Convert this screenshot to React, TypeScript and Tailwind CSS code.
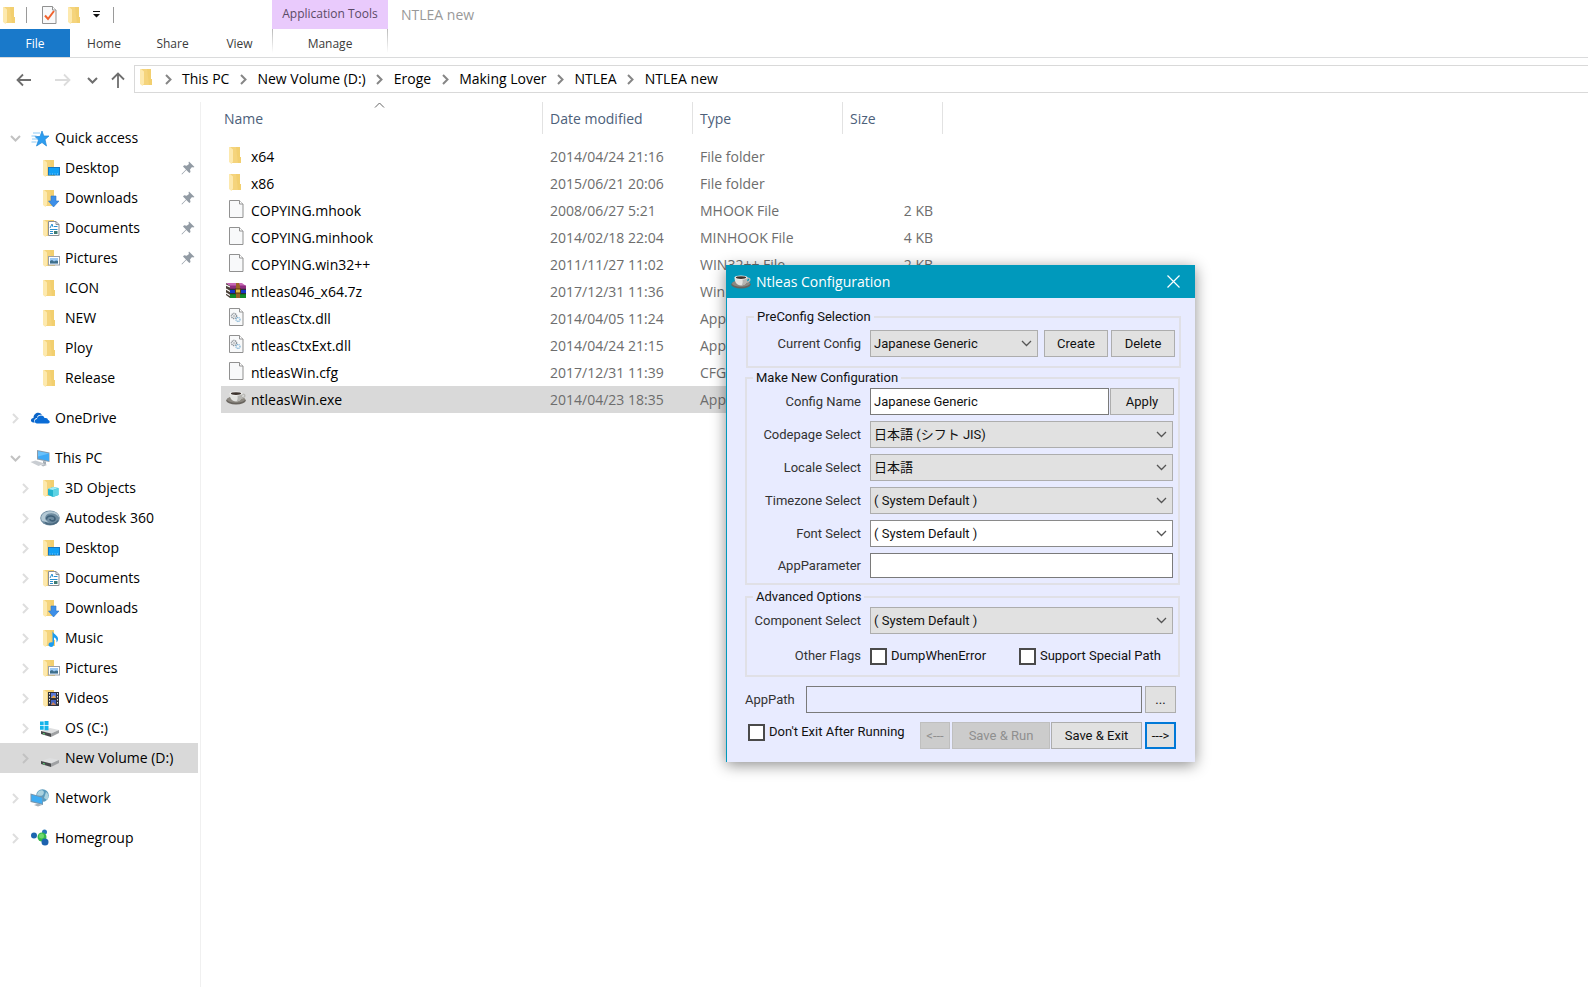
import type { ReactNode } from "react";

const FOLDER_ICONS = {
    plain: null,
    desktop: (
        <>
            <rect x="8.5" y="9.5" width="11" height="7.5" fill="#12a0f5" stroke="#1578c2" />
            <path d="M9.5 16h9" stroke="#7fd0ff" strokeDasharray="1 1.5" />
        </>
    ),
    downloads: <path d="M11 8h5v5h3l-5.5 6L8.500 13H11z" fill="#3d8fe8" stroke="#2d75c8" strokeWidth=".6" />,
    documents: (
        <>
            <path d="M8.500 3.500h7.500l3 3v11h-10.500z" fill="#fff" stroke="#8b8f94" />
            <path d="M16 3.500v3h3" fill="none" stroke="#8b8f94" />
            <path d="M10 10l2-4 1 3M14 8.500h3.500M10 11.500h7.500M10 13.500h3M10 15.500h3" fill="none" stroke="#2a8fd0" />
            <path d="M14 13h3.500v3H14z" fill="#3d7a72" />
        </>
    ),
    pictures: (
        <>
            <rect x="8.500" y="8.500" width="11" height="8.500" fill="#fff" stroke="#9aa0a8" />
            <rect x="10" y="10" width="8" height="5.500" fill="#9cc9f5" />
            <path d="M10 13l2-1 2 1.500 2-1 2 .500v2.500h-8z" fill="#3f6f8c" />
        </>
    ),
    objects: (
        <>
            <path d="M8 11l5-2 5.500 1v7L13 19l-5-2z" fill="#24b4cf" />
            <path d="M8 11l5-2 5.500 1-5.500 2z" fill="#a6ecf5" />
            <path d="M13 12l5.500-2v7L13 19z" fill="#5ed3e4" />
        </>
    ),
    music: (
        <path
            d="M12.500 3c.500 3 5 4 5.500 7.500.200 1.800-.500 3-1.500 4 .500-3-.800-4.500-2.500-5v6.500c0 4-5.500 3.500-5.500.800 0-2 2-2.800 4-2.300z"
            fill="#1b9cf0"
        />
    ),
    videos: (
        <>
            <rect x="8" y="4" width="11" height="14" fill="#30323a" />
            <path d="M9.500 5v12M17.500 5v12" stroke="#e8e8e8" strokeDasharray="1.500 1.500" />
            <rect x="11" y="5" width="5" height="5" fill="#5878d8" />
            <path d="M11 10l3-3 2 3z" fill="#e8a84c" />
            <rect x="11" y="12" width="5" height="5" fill="#4562bd" />
            <path d="M11 17l2-3 3 3z" fill="#c9825c" />
        </>
    ),
};

type FolderKind = keyof typeof FOLDER_ICONS;

const Svg = ({ children, className = "" }: { children: ReactNode; className?: string }) => (
    <svg viewBox="0 0 20 20" className={`size-5 shrink-0 ${className}`} aria-hidden="true">
        {children}
    </svg>
);

const Folder = ({ kind = "plain", className }: { kind?: FolderKind; className?: string }) => (
    <Svg className={className}>
        <path d="M4 2h10v10h1v6H5z" fill="#f5d47c" />
        <path d="M10 2h4v10h1v6h-3z" fill="#f0cb68" opacity=".6" />
        <path d="M3 2h1l3 2.500v12L5.500 19 3 17z" fill="#fde9ae" />
        {FOLDER_ICONS[kind]}
    </Svg>
);

const Page = ({ children, className }: { children?: ReactNode; className?: string }) => (
    <Svg className={className}>
        <path d="M3.500 1.500h10l3.500 3.500v13.500H3.500z" fill="#f8f9fa" stroke="#919191" />
        <path d="M13.500 1.500V5H17" fill="#fff" stroke="#919191" />
        {children}
    </Svg>
);

const Gears = () => (
    <>
        <circle cx="8" cy="9" r="2.500" fill="none" stroke="#8a9097" strokeWidth="1.500" strokeDasharray="1.200 .600" />
        <circle cx="8" cy="9" r=".800" fill="#8a9097" />
        <circle cx="12" cy="12.500" r="2" fill="none" stroke="#7fb2d4" strokeWidth="1.300" strokeDasharray="1 .500" />
    </>
);

const Cup = ({ className }: { className?: string }) => (
    <Svg className={className}>
        <ellipse cx="10" cy="12.500" rx="9.800" ry="4" fill="#68645e" />
        <ellipse cx="10" cy="11.500" rx="9" ry="3.200" fill="#8c8881" />
        <path d="M15.500 6.500c4-1.500 5 2.500 0 4" fill="none" stroke="#b9b9b5" strokeWidth="1.300" />
        <path d="M3.500 5.500h13c0 4-2 8-6.500 8s-6.500-4-6.500-8z" fill="#e3e3e0" />
        <path d="M11 6h5.500c0 4-2 7.500-6 7.500 1.500-2 1.500-5 .500-7.500z" fill="#b5b5b1" />
        <ellipse cx="10" cy="5.500" rx="6.500" ry="2" fill="#f4f4f2" />
        <ellipse cx="10" cy="5.600" rx="5.200" ry="1.400" fill="#3d332d" />
    </Svg>
);

const Books = ({ className }: { className?: string }) => (
    <Svg className={className}>
        <path d="M0 3l4 2v13l-4-3z" fill="#4a4038" />
        <path d="M0 5l4 2M0 9l4 2.500M0 13l4 2.500" stroke="#fff" strokeWidth="1.200" />
        <path d="M0 3h16l4 3H4z" fill="#c667b4" />
        <path d="M4 5.500h16V9H4z" fill="#8e2f80" />
        <path d="M4 9.500h16v4H4z" fill="#1538c4" />
        <path d="M4 14h16v4H4z" fill="#128a28" />
        <path d="M4 9.300h16M4 13.700h16" stroke="#141414" />
        <path d="M10 3h3l1 3v12h-4V6z" fill="#9b6427" />
        <rect x="9.500" y="9" width="5" height="4" fill="#e2bf48" stroke="#593b12" />
    </Svg>
);

const Star = () => (
    <Svg>
        <path d="M12 3l1.800 5H19l-4 3.500L16.500 18 12 14.500 6.500 18l2-6L5 8.500h5z" fill="#2c9df0" stroke="#2387d6" strokeWidth=".700" />
        <path d="M3 5h7M1.500 8h5M2 11h6M1.500 14h5" stroke="#7fc3f4" strokeWidth=".900" />
    </Svg>
);

const Cloud = () => (
    <Svg>
        <path d="M3.500 14.500C0 14.500.200 10 3.500 10c0-5 6-7 8.500-3-3-1-5 1-5 3-3 .500-3.500 3-2 4.500z" fill="#0a64c8" />
        <path d="M7 15.500c-3 0-3-4.500 0-4.500 0-4 6.500-5 7.500-1 3-.500 3.500 1 3.500 2 2.500.500 2 3.500 0 3.500z" fill="#0a6cd6" />
    </Svg>
);

const Computer = () => (
    <Svg>
        <path d="M7 2l12.500 2.500v9.500L7 11.500z" fill="#8b9aa8" />
        <path d="M8 3.200l11 2.300v7.500L8 10.500z" fill="#3fa9f5" />
        <path d="M8 3.200l11 2.300-11 3z" fill="#69c1fb" />
        <path d="M13 13l3 .500v3l-3-.500z" fill="#a4adb5" />
        <path d="M.500 14l5-1.500 9 3-6 2.500z" fill="#c9cdd2" />
        <path d="M11 17l4-1 2 1-4 1.500z" fill="#b3b9bf" />
    </Svg>
);

const Autodesk = () => (
    <Svg>
        <ellipse cx="10" cy="10" rx="9.800" ry="7.500" fill="#6d8ba0" />
        <path d="M2 13c-3-6 3-10 9-9.800 5 .200 8 2.800 8 6.300-3-5-10.500-5.500-13-2-1.800 2.500-.500 5.500 3 7z" fill="#b3c8d4" />
        <path d="M6.500 11.500c0-4.500 8.500-4.500 8.500-.800 0 2.800-5 2.800-5 .300" fill="none" stroke="#3f6078" strokeWidth="1.700" />
        <path d="M5 14.500c4 3 11 2 13-2" fill="none" stroke="#48677d" strokeWidth="1.500" />
    </Svg>
);

const Drive = ({ system }: { system?: boolean }) => (
    <Svg>
        <path d="M1 13l9-3 9 2-8 3.500z" fill="#dedfe0" />
        <path d="M1 13l10 2.500V19L1 16z" fill="#47494b" />
        <path d="M11 15.500l8-3.500v3L11 19z" fill="#9fa1a3" />
        <path d="M3 15.500l2 .600" stroke="#5fe07a" />
        {system && <path d="M0 3.500h3.700v3.700H0zM4.500 3h4v4.200h-4zM0 8h3.700v3.700H0zM4.500 8h4v4.200h-4z" fill="#14b4ea" />}
    </Svg>
);

const Network = () => (
    <Svg>
        <circle cx="12.500" cy="7.500" r="6.300" fill="#5b9bbd" />
        <path d="M9 3c3-2 6 0 4.500 3S9 7 7 8c0-2 .500-4 2-5zM16 4c3 2 3 6 1 8l-3-2z" fill="#abd2df" />
        <path d="M.500 5.500L13 9v8L.500 14z" fill="#7795ad" />
        <path d="M1.500 6.700L12.300 9.700v6L1.500 13z" fill="#3eacf3" />
        <path d="M4 17l4-1.500 4 1.500-4 1.500z" fill="#a6b1ba" />
    </Svg>
);

const Homegroup = () => (
    <Svg>
        <circle cx="4" cy="7.500" r="3" fill="#1d66b0" />
        <circle cx="14.500" cy="4" r="2.500" fill="#2876b8" />
        <circle cx="12" cy="9" r="4.500" fill="#35b84a" />
        <circle cx="11.500" cy="8" r="2.500" fill="#70d86d" />
        <circle cx="15" cy="14" r="3.500" fill="#1d62ae" />
    </Svg>
);

const Pin = () => (
    <svg viewBox="0 0 14 14" className="ml-auto mr-[3px] size-[14px] shrink-0" aria-hidden="true">
        <path d="M8 0.500L13.500 6l-1.500.500-1-.500-2 2.500.500 2.500-1.200 1-3-3L1 13.500l-.500-.500L5 8.500l-3-3 1.200-1.200 2.500.500L8 3l-.500-1.200z" fill="#929ba4" />
    </svg>
);

const Chevron = ({ dir, className = "" }: { dir: "right" | "down" | "up"; className?: string }) => {
    const paths = { right: "M3 1l4.500 4.500L3 10", down: "M1 3l4.500 4.500L10 3", up: "M1 7.500L5.500 3 10 7.500" };
    return (
        <svg viewBox="0 0 11 11" className={`size-[11px] shrink-0 ${className}`} fill="none" stroke="currentColor" aria-hidden="true">
            <path d={paths[dir]} />
        </svg>
    );
};

interface TreeItem {
    label: string;
    icon: ReactNode;
    open?: boolean;
    leaf?: boolean;
    pinned?: boolean;
    selected?: boolean;
    items?: TreeItem[];
}

const TREE: TreeItem[] = [
    {
        label: "Quick access",
        icon: <Star />,
        open: true,
        items: [
            { label: "Desktop", icon: <Folder kind="desktop" />, leaf: true, pinned: true },
            { label: "Downloads", icon: <Folder kind="downloads" />, leaf: true, pinned: true },
            { label: "Documents", icon: <Folder kind="documents" />, leaf: true, pinned: true },
            { label: "Pictures", icon: <Folder kind="pictures" />, leaf: true, pinned: true },
            { label: "ICON", icon: <Folder />, leaf: true },
            { label: "NEW", icon: <Folder />, leaf: true },
            { label: "Ploy", icon: <Folder />, leaf: true },
            { label: "Release", icon: <Folder />, leaf: true },
        ],
    },
    { label: "OneDrive", icon: <Cloud /> },
    {
        label: "This PC",
        icon: <Computer />,
        open: true,
        items: [
            { label: "3D Objects", icon: <Folder kind="objects" /> },
            { label: "Autodesk 360", icon: <Autodesk /> },
            { label: "Desktop", icon: <Folder kind="desktop" /> },
            { label: "Documents", icon: <Folder kind="documents" /> },
            { label: "Downloads", icon: <Folder kind="downloads" /> },
            { label: "Music", icon: <Folder kind="music" /> },
            { label: "Pictures", icon: <Folder kind="pictures" /> },
            { label: "Videos", icon: <Folder kind="videos" /> },
            { label: "OS (C:)", icon: <Drive system /> },
            { label: "New Volume (D:)", icon: <Drive />, selected: true },
        ],
    },
    { label: "Network", icon: <Network /> },
    { label: "Homegroup", icon: <Homegroup /> },
];

const FILES = [
    { name: "x64", icon: <Folder className="mb-1" />, date: "2014/04/24 21:16", type: "File folder", size: "" },
    { name: "x86", icon: <Folder className="mb-1" />, date: "2015/06/21 20:06", type: "File folder", size: "" },
    { name: "COPYING.mhook", icon: <Page className="mb-1" />, date: "2008/06/27 5:21", type: "MHOOK File", size: "2 KB" },
    { name: "COPYING.minhook", icon: <Page className="mb-1" />, date: "2014/02/18 22:04", type: "MINHOOK File", size: "4 KB" },
    { name: "COPYING.win32++", icon: <Page className="mb-1" />, date: "2011/11/27 11:02", type: "WIN32++ File", size: "2 KB" },
    { name: "ntleas046_x64.7z", icon: <Books className="mb-1" />, date: "2017/12/31 11:36", type: "WinRAR", size: "" },
    { name: "ntleasCtx.dll", icon: <Page className="mb-1"><Gears /></Page>, date: "2014/04/05 11:24", type: "App ext", size: "" },
    { name: "ntleasCtxExt.dll", icon: <Page className="mb-1"><Gears /></Page>, date: "2014/04/24 21:15", type: "App ext", size: "" },
    { name: "ntleasWin.cfg", icon: <Page className="mb-1" />, date: "2017/12/31 11:39", type: "CFG File", size: "" },
    { name: "ntleasWin.exe", icon: <Cup className="mb-1" />, date: "2014/04/23 18:35", type: "Application", size: "", selected: true },
];

const CRUMBS = ["This PC", "New Volume (D:)", "Eroge", "Making Lover", "NTLEA", "NTLEA new"];

const TreeRow = ({ item, nested }: { item: TreeItem; nested?: boolean }) => (
    <a
        href="#"
        className={`flex h-[30px] items-center gap-[5px] ${nested ? "pl-5" : "pl-[10px]"} ${item.selected ? "bg-[#d9d9d9]" : ""}`}
    >
        <span className={`flex w-[15px] ${item.open || item.selected ? "text-[#c2c2c2]" : "text-[#dedede]"}`}>
            {!item.leaf && <Chevron dir={item.open ? "down" : "right"} className="stroke-2" />}
        </span>
        {item.icon}
        <span className="whitespace-nowrap">{item.label}</span>
        {item.pinned && <Pin />}
    </a>
);

const Sidebar = () => (
    <nav className="w-[201px] shrink-0 border-r border-[#f0f0f0] pr-[2px] pt-[21px]">
        <ul className="flex flex-col gap-[10px]">
            {TREE.map((item) => (
                <li key={item.label}>
                    <TreeRow item={item} />
                    {item.items && (
                        <ul>
                            {item.items.map((child) => (
                                <li key={child.label}>
                                    <TreeRow item={child} nested />
                                </li>
                            ))}
                        </ul>
                    )}
                </li>
            ))}
        </ul>
    </nav>
);

const HeaderCell = ({ children }: { children: ReactNode }) => (
    <th className="p-0 pb-[9px] font-normal">
        <div className="flex h-8 items-center border-r border-[#e2e2e2] pl-[7px] pt-[2px]">{children}</div>
    </th>
);

const FileTable = () => (
    <table className="ml-5 w-[722px] table-fixed self-start text-left text-[#6d6d6d]">
        <colgroup>
            <col className="w-[322px]" />
            <col className="w-[150px]" />
            <col className="w-[150px]" />
            <col className="w-[100px]" />
        </colgroup>
        <thead className="text-[#4c607a]">
            <tr>
                <th className="p-0 pb-[9px] font-normal">
                    <div className="relative flex h-8 items-center border-r border-[#e2e2e2] pl-[3px] pt-[2px]">
                        Name
                        <Chevron dir="up" className="absolute left-[153px] top-[-2px] text-[#666]" />
                    </div>
                </th>
                <HeaderCell>Date modified</HeaderCell>
                <HeaderCell>Type</HeaderCell>
                <HeaderCell>Size</HeaderCell>
            </tr>
        </thead>
        <tbody>
            {FILES.map((file) => (
                <tr key={file.name} className={`h-[27px] ${file.selected ? "bg-[#d9d9d9]" : ""}`}>
                    <td className="p-0 pl-[5px]">
                        <div className="flex h-[27px] items-center gap-[5px] text-black">
                            {file.icon}
                            {file.name}
                        </div>
                    </td>
                    <td className="p-0 pl-[7px]">{file.date}</td>
                    <td className="p-0 pl-[7px]">{file.type}</td>
                    <td className="p-0 pr-[10px] text-right">{file.size}</td>
                </tr>
            ))}
        </tbody>
    </table>
);

const Ribbon = () => (
    <header className="text-[12px] text-[#3b3b3b]">
        <div className="flex h-[29px]">
            <div className="flex w-[272px] items-center">
                <Folder />
                <span className="ml-[6px] h-4 w-px bg-[#9a9a9a]" />
                <Page className="ml-3">
                    <path d="M6 10.500l3 3.500 6-8" fill="none" stroke="#f0622d" strokeWidth="2" />
                </Page>
                <Folder className="ml-[6px]" />
                <svg viewBox="0 0 7 7" className="ml-2 size-[7px]" aria-hidden="true">
                    <path d="M0 0h7v1H0zM0 3h7L3.500 6.500z" fill="#111" />
                </svg>
                <span className="ml-[13px] h-4 w-px bg-[#9a9a9a]" />
            </div>
            <div className="flex w-[116px] items-center justify-center whitespace-nowrap bg-[#e9cafc] pb-px text-[#5b4a66]">
                Application Tools
            </div>
            <h1 className="ml-[13px] self-center text-[14px] text-[#999]">NTLEA new</h1>
        </div>
        <div className="flex h-[29px] border-b border-[#dadbdc]">
            <button className="w-[70px] bg-[#1979ca] pt-[2px] text-white">File</button>
            <button className="w-[68px] pt-[2px]">Home</button>
            <button className="w-[69px] pt-[2px]">Share</button>
            <button className="w-[65px] pt-[2px]">View</button>
            <div className="flex w-[116px] justify-between">
                <span className="h-6 w-px bg-linear-to-b from-[#b9b9b9] to-white" />
                <button className="pt-[2px]">Manage</button>
                <span className="h-6 w-px bg-linear-to-b from-[#b9b9b9] to-white" />
            </div>
        </div>
    </header>
);

const AddressBar = () => (
    <div className="flex h-[44px] items-start pt-[7px]">
        <div className="flex h-7 w-[134px] shrink-0 items-center pl-4 pt-[2px] text-[#6e6e6e]">
            <button aria-label="Back">
                <svg viewBox="0 0 16 16" className="size-4" fill="none" stroke="currentColor" strokeWidth="1.800">
                    <path d="M15 8H1.500M7 2.500L1.500 8 7 13.500" />
                </svg>
            </button>
            <button aria-label="Forward" className="ml-[23px] text-[#dcdcdc]">
                <svg viewBox="0 0 16 16" className="size-4" fill="none" stroke="currentColor" strokeWidth="1.800">
                    <path d="M0 8h14M9 2.500L14.500 8 9 13.500" />
                </svg>
            </button>
            <button aria-label="Recent locations" className="ml-4">
                <Chevron dir="down" className="stroke-2" />
            </button>
            <button aria-label="Up" className="ml-3">
                <svg viewBox="0 0 16 16" className="size-4" fill="none" stroke="currentColor" strokeWidth="1.800">
                    <path d="M8 16V1.500M2 7.500l6-6 6 6" />
                </svg>
            </button>
        </div>
        <div className="flex h-7 flex-1 items-center border border-r-0 border-[#d9d9d9] pl-[2px]">
            <Folder className="-mr-[3px] mb-1" />
            <ol className="flex">
                {CRUMBS.map((crumb) => (
                    <li key={crumb} className="flex items-center whitespace-nowrap">
                        <span className="flex w-7 justify-center text-[#868686]">
                            <Chevron dir="right" className="stroke-2" />
                        </span>
                        <a href="#">{crumb}</a>
                    </li>
                ))}
            </ol>
        </div>
    </div>
);

const DialogSelect = ({ id, options, white }: { id: string; options: string[]; white?: boolean }) => (
    <div className="relative flex-1">
        <select
            id={id}
            className={`block h-[27px] w-full appearance-none rounded-none border px-[3px] ${
                white ? "border-[#8a8a8a] bg-white" : "border-[#adadad] bg-[#e1e1e1]"
            }`}
        >
            {options.map((option) => (
                <option key={option}>{option}</option>
            ))}
        </select>
        <Chevron dir="down" className="pointer-events-none absolute right-[6px] top-2 stroke-[1.3px] text-[#555]" />
    </div>
);

const DialogButton = ({ children, className, disabled }: { children: ReactNode; className: string; disabled?: boolean }) => (
    <button
        disabled={disabled}
        className={`h-[27px] shrink-0 whitespace-nowrap ${
            disabled ? "border border-[#bfbfbf] bg-[#ccc] text-[#8f8f8f]" : "bg-[#e1e1e1]"
        } ${className}`}
    >
        {children}
    </button>
);

const Field = ({ id, label, children }: { id: string; label: string; children: ReactNode }) => (
    <div className="flex items-center gap-[9px]">
        <label htmlFor={id} className="w-[114px] shrink-0 whitespace-nowrap text-right text-[#333]">
            {label}
        </label>
        {children}
    </div>
);

const Group = ({ title, className, children }: { title: string; className: string; children: ReactNode }) => (
    <fieldset className={`border-2 border-[#e0e0e6] ${className}`}>
        <legend className="ml-[6px] h-4 px-[3px] leading-4">{title}</legend>
        {children}
    </fieldset>
);

const Check = ({ label, className = "" }: { label: string; className?: string }) => (
    <label className={`flex items-center gap-1 whitespace-nowrap ${className}`}>
        <input type="checkbox" className="size-[17px] appearance-none border-2 border-[#4a4a4a] bg-white checked:bg-[#0078d7]" />
        {label}
    </label>
);

const ConfigDialog = () => (
    <section
        role="dialog"
        aria-labelledby="dialog-title"
        className="absolute left-[726px] top-[265px] w-[469px] border-l border-[#0099bc] bg-[#e8ebff] shadow-[0_3px_14px_rgba(0,0,0,0.45)]"
    >
        <div className="flex h-[33px] items-center bg-[#0099bc] pl-1 pr-[15px] font-['Open_Sans',sans-serif] text-[14px] text-white">
            <Cup />
            <h2 id="dialog-title" className="ml-[5px]">Ntleas Configuration</h2>
            <button aria-label="Close" className="ml-auto">
                <svg viewBox="0 0 13 13" className="size-[13px]" fill="none" stroke="currentColor" strokeWidth="1.200">
                    <path d="M.500.500l12 12M12.500.500l-12 12" />
                </svg>
            </button>
        </div>
        <form className="pb-[13px] pl-[18px] pr-[15px] pt-[11px] font-['Roboto','Noto_Sans_CJK_JP',sans-serif] text-[13px] text-[#111]">
            <Group title="PreConfig Selection" className="-mr-px ml-px pb-[9px] pr-1 pt-[5px]">
                <div className="flex">
                    <div className="-ml-px flex-1">
                        <Field id="current" label="Current Config">
                            <DialogSelect id="current" options={["Japanese Generic"]} />
                        </Field>
                    </div>
                    <DialogButton className="ml-[6px] w-[64px] border border-[#adadad]">Create</DialogButton>
                    <DialogButton className="ml-[3px] w-[64px] border border-[#adadad]">Delete</DialogButton>
                </div>
            </Group>
            <Group title="Make New Configuration" className="mt-[2px] pb-[5px] pr-[5px]">
                <div className="flex flex-col gap-[6px] pt-[2px]">
                    <div className="-mr-px flex">
                        <div className="flex-1">
                            <Field id="name" label="Config Name">
                                <input id="name" defaultValue="Japanese Generic" className="h-[27px] w-0 flex-1 border border-[#7a7a7a] bg-white px-[3px]" />
                            </Field>
                        </div>
                        <DialogButton className="ml-px w-[64px] border border-[#adadad]">Apply</DialogButton>
                    </div>
                    <Field id="codepage" label="Codepage Select">
                        <DialogSelect id="codepage" options={["日本語 (シフト JIS)"]} />
                    </Field>
                    <Field id="locale" label="Locale Select">
                        <DialogSelect id="locale" options={["日本語"]} />
                    </Field>
                    <Field id="timezone" label="Timezone Select">
                        <DialogSelect id="timezone" options={["( System Default )"]} />
                    </Field>
                    <Field id="font" label="Font Select">
                        <DialogSelect id="font" options={["( System Default )"]} white />
                    </Field>
                    <Field id="parameter" label="AppParameter">
                        <input id="parameter" className="h-[25px] w-0 flex-1 border border-[#7a7a7a] bg-white px-[3px]" />
                    </Field>
                </div>
            </Group>
            <Group title="Advanced Options" className="mt-1 pb-[9px] pr-[5px]">
                <div className="flex flex-col gap-3 pt-[2px]">
                    <Field id="component" label="Component Select">
                        <DialogSelect id="component" options={["( System Default )"]} />
                    </Field>
                    <div className="flex items-center gap-[9px]">
                        <span className="w-[114px] shrink-0 text-right text-[#333]">Other Flags</span>
                        <div className="flex flex-1 justify-between pr-[12px]">
                            <Check label="DumpWhenError" />
                            <Check label="Support Special Path" />
                        </div>
                    </div>
                </div>
            </Group>
            <div className="mt-[9px] flex items-center pr-1">
                <label htmlFor="path" className="w-[61px] text-[#333]">AppPath</label>
                <input id="path" className="h-[27px] w-0 flex-1 border border-[#7a7a7a] bg-[#e8ebff] px-[3px]" />
                <DialogButton className="ml-[3px] w-[31px] border border-[#adadad]">...</DialogButton>
            </div>
            <div className="mt-[9px] flex items-center pl-[3px] pr-1">
                <Check label="Don't Exit After Running" className="self-start" />
                <DialogButton disabled className="ml-auto w-[30px]">{"<---"}</DialogButton>
                <DialogButton disabled className="ml-[2px] w-[98px]">Save &amp; Run</DialogButton>
                <DialogButton className="ml-px w-[91px] border border-[#adadad]">Save &amp; Exit</DialogButton>
                <DialogButton className="ml-[3px] w-[31px] border-2 border-[#0078d7]">{"--->"}</DialogButton>
            </div>
        </form>
    </section>
);

export default function App() {
    return (
        <div className="relative flex min-h-screen flex-col overflow-hidden bg-white font-['Open_Sans',sans-serif] text-[14px] leading-5 text-black">
            <Ribbon />
            <AddressBar />
            <main className="flex flex-1">
                <Sidebar />
                <FileTable />
            </main>
            <ConfigDialog />
        </div>
    );
}
